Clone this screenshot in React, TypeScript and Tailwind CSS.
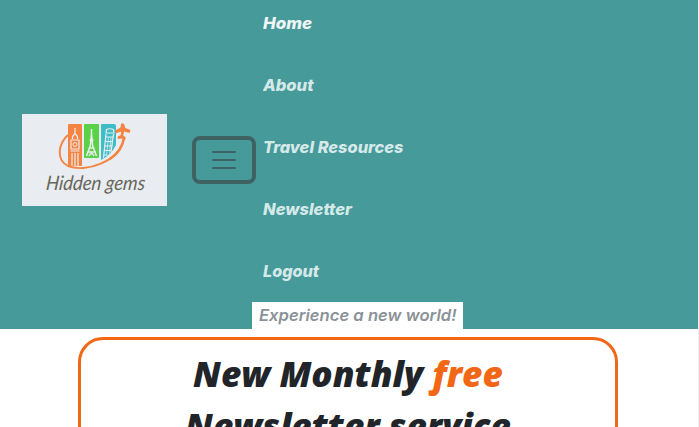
const links = [
  { label: "Home", width: 49 },
  { label: "About", width: 50.5 },
  { label: "Travel Resources", width: 140.5 },
  { label: "Newsletter", width: 89 },
  { label: "Logout", width: 56 },
];

function Logo() {
  return (
    <svg viewBox="0 0 145 92" className="block h-[92px] w-[145px] shrink-0 bg-[#e9edf2]" role="img" aria-label="Hidden gems">
      <rect x="46" y="10" width="14" height="42" rx="1" fill="#f58442" />
      <rect x="62" y="10" width="15" height="34" rx="1" fill="#5bd147" />
      <path d="M80 10h12q2 0 2 2v19q-5 10-15 15V11q0-1 1-1Z" fill="#3ebdc6" />
      <g fill="none" stroke="#e9edf2">
        <path d="M53 14v6M50.500 25v-2.500l2.500-3 2.500 3V25M49 26h8v9h-8zM48.500 37h9M50 39v13M53 39v13M56 39v13" strokeWidth="1.200" />
        <circle cx="53" cy="30.500" r="2" strokeWidth="1" />
        <path d="M69.500 15v6M69.500 20l-1.200 12-3.800 10M69.500 20l1.200 12 3.800 10M67.500 26h4M66.500 34h6M65 38h9M67 42q2.500-5 5 0" strokeWidth="1.500" />
        <path d="M84 19l.5-3.500q3.500-1.500 7 0l.5 3.500zM84 20l-2.500 24M91.500 20l-2.500 18" strokeWidth="1.200" />
        <path d="M83.500 23h8M83 27.500h8M82.500 32h8M82 36.500h7M81.500 41h4" strokeWidth="1.200" />
        <path d="M86.500 23.500l-2 18M89 23.500l-1.500 16" strokeWidth=".7" />
      </g>
      <path d="M46 21C36 30 34 46 46 52c17 7 52-4 56-28" fill="none" stroke="#f58442" strokeWidth="1.900" />
      <path d="M88 45C97 39 101 32 102 23" fill="none" stroke="#f58442" strokeWidth="2.400" />
      <path d="M99 10q2.500-2 3.500 1l.8 3 5.200 2-1 3-5.500-1.500-.7 4 2.500 2-.5 2-4-1-3.500.5v-2.500l3-1.500.3-3.500-5.300 2-.5-3 5.200-3Z" fill="#f58442" />
      <text x="31.500" y="76" transform="skewX(-6)" textLength="99" lengthAdjust="spacingAndGlyphs" className="font-['Lato',sans-serif] text-[20px] font-normal italic" fill="#68675b">
        Hidden gems
      </text>
    </svg>
  );
}

export default function App() {
  return (
    <div className="h-[427px] w-full overflow-hidden border-r border-[#f0f0f0] bg-white">
      <header className="flex h-[329px] items-start bg-[#469a9a]">
        <div className="flex h-[320px] items-center pl-[22px]">
          <Logo />
          <button aria-label="Toggle navigation" className="ml-[25px] flex h-12 w-16 items-center justify-center rounded-lg border-4 border-[#3e6262]">
            <svg width="30" height="30" viewBox="0 0 30 30" fill="none" stroke="#3e6262" strokeWidth="2" strokeLinecap="round">
              <path d="M4 7h22M4 15h22M4 23h22" />
            </svg>
          </button>
        </div>
        <nav className="-ml-1 flex h-full flex-col items-start">
          {links.map(({ label, width }, i) => (
            <a key={label} href="#" className="block h-[62px] pt-[7px] pl-[11px]">
              <svg width="160" height="32" className={i === 0 ? "block fill-[#f0f6f7]" : "block fill-[#d5e9e9]"}>
                <text x="0" y="22" textLength={width} lengthAdjust="spacingAndGlyphs" className="font-['Inter',sans-serif] text-[16.5px] font-extrabold italic">
                  {label}
                </text>
              </svg>
            </a>
          ))}
          <div className="-mt-2 h-[27px] w-[211px] bg-white pl-[7px]">
            <svg width="204" height="27" fill="#8b9297">
              <text x="0" y="19" textLength="197.500" lengthAdjust="spacingAndGlyphs" className="font-['Inter',sans-serif] text-[16.5px] font-semibold italic">
                Experience a new world!
              </text>
            </svg>
          </div>
        </nav>
      </header>
      <main className="mt-2 ml-[78px] h-[200px] w-[540px] rounded-[25px] border-[3px] border-[#f26716] pt-[7px]">
        <h1 className="text-center font-['Open_Sans',sans-serif] text-[35.2px] leading-[52px] font-extrabold text-[#212529] italic">
          New Monthly <span className="text-[#f26716]">free</span>
          <br />
          Newsletter service
        </h1>
      </main>
    </div>
  );
}
